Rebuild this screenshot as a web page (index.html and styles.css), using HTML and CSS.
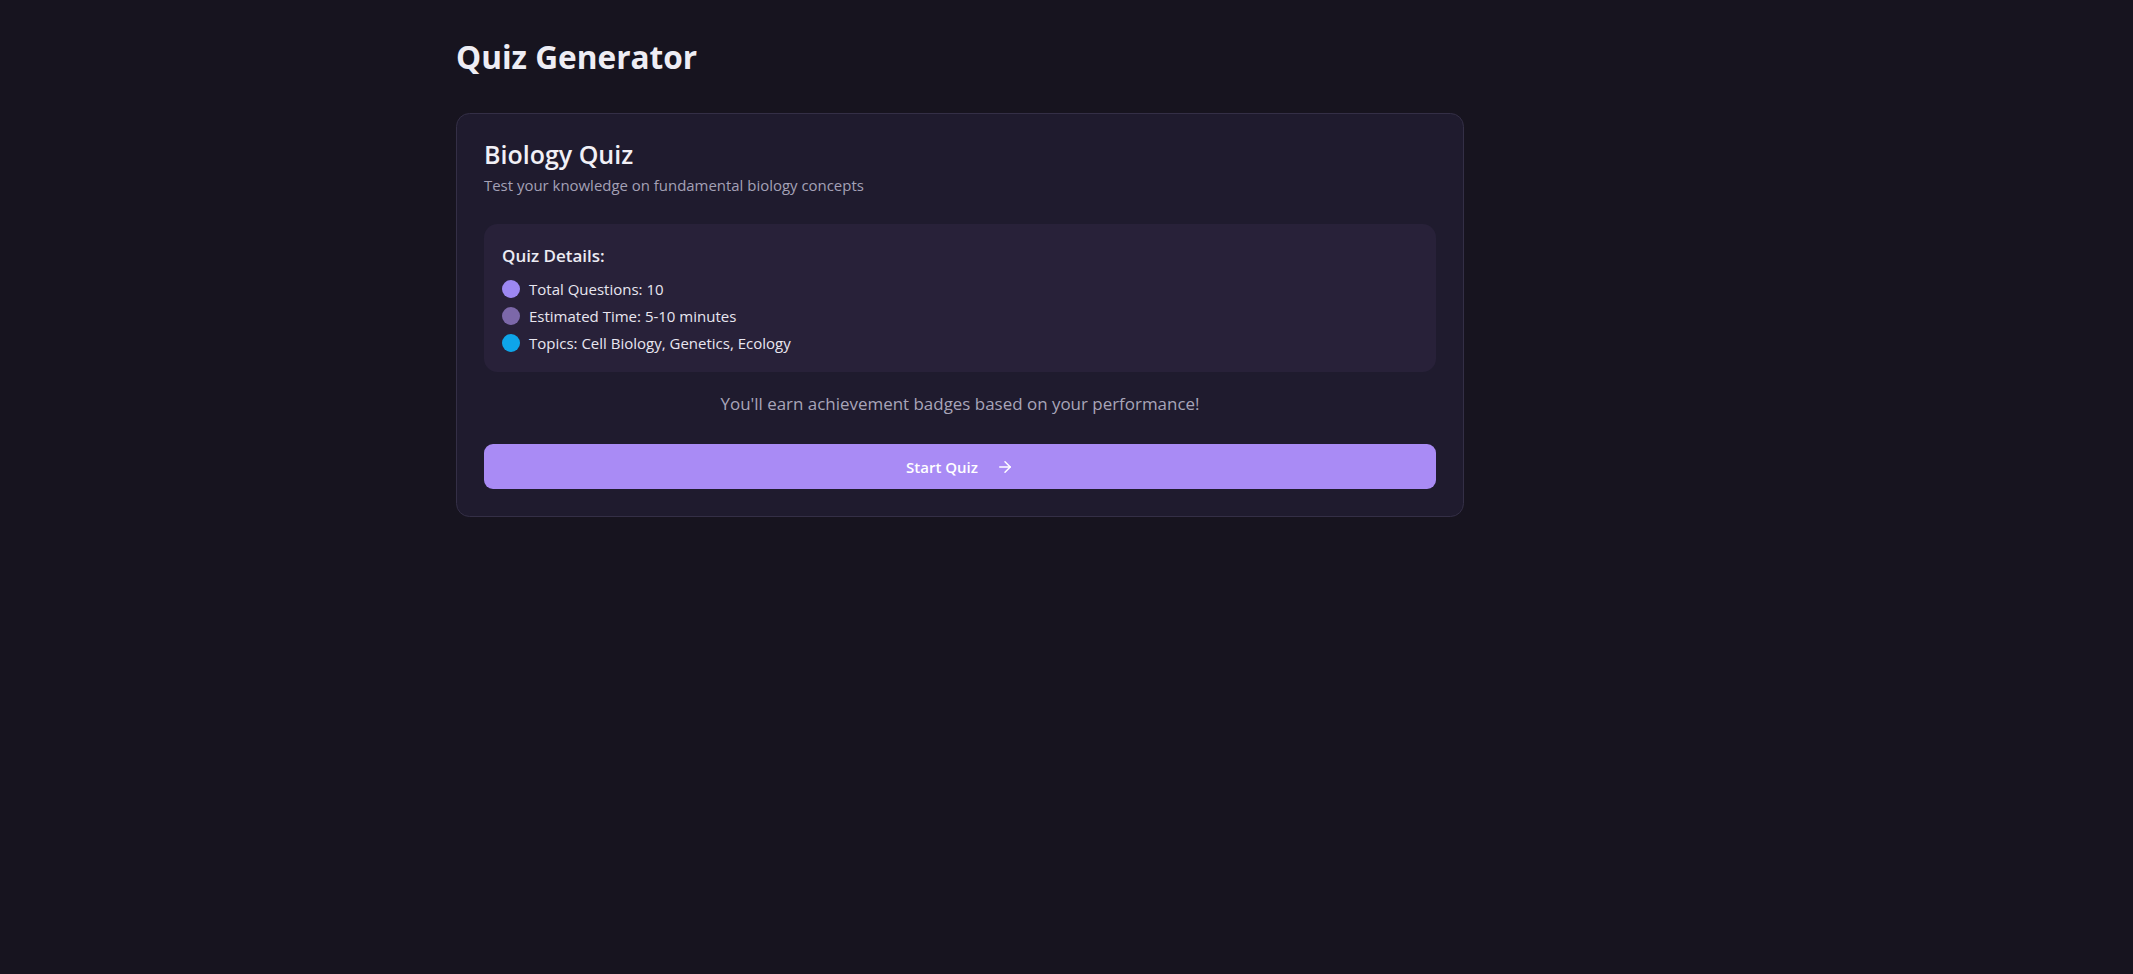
FILE: index.html
```html
<!DOCTYPE html>
<html lang="en">
<head>
<meta charset="utf-8">
<title>Quiz Generator</title>
<link rel="stylesheet" href="styles.css">
</head>
<body>
<main class="page">
  <h1 class="page-title">Quiz Generator</h1>
  <section class="card">
    <header class="card-header">
      <h2 class="card-title">Biology Quiz</h2>
      <p class="card-desc">Test your knowledge on fundamental biology concepts</p>
    </header>
    <div class="card-content">
      <div class="details">
        <h3 class="details-title">Quiz Details:</h3>
        <ul class="details-list">
          <li class="details-item"><span class="dot dot-violet"></span>Total Questions: 10</li>
          <li class="details-item"><span class="dot dot-muted"></span>Estimated Time: 5-10 minutes</li>
          <li class="details-item"><span class="dot dot-sky"></span>Topics: Cell Biology, Genetics, Ecology</li>
        </ul>
      </div>
      <p class="note">You'll earn achievement badges based on your performance!</p>
      <button class="btn" type="button">
        <span>Start Quiz</span>
        <svg class="btn-icon" viewBox="0 0 24 24" fill="none" stroke="currentColor" stroke-width="2" stroke-linecap="round" stroke-linejoin="round"><path d="M5 12h14"/><path d="m12 5 7 7-7 7"/></svg>
      </button>
    </div>
  </section>
</main>
</body>
</html>
```
FILE: styles.css
```css
* { box-sizing: border-box; }

body {
  margin: 0;
  background: #17141f;
  color: #ecebf3;
  font-family: "Segoe UI", "Open Sans", "Noto Sans", sans-serif;
}

.page {
  max-width: 1293px;
  margin: 0 auto;
  padding: 37px 36px;
}

.page-title {
  font-size: 31.6px;
  line-height: 40.5px;
  font-weight: 700;
  margin: 0 0 35px;
  color: #eeedf4;
}

.card {
  max-width: 1008px;
  background: #1f1b2e;
  border: 1px solid #342f46;
  border-radius: 13.5px;
}

.card-header {
  padding: 27px;
  display: flex;
  flex-direction: column;
  gap: 6.75px;
}

.card-title {
  font-size: 25px;
  line-height: 27px;
  font-weight: 600;
  margin: 0;
  color: #f1f0f6;
}

.card-desc {
  font-size: 14.95px;
  line-height: 22.5px;
  color: #a4a1b6;
  margin: 0;
}

.card-content {
  padding: 0 27px 27px;
}

.details {
  background: #282139;
  border-radius: 13.5px;
  padding: 18px;
}

.details-title {
  font-size: 17px;
  line-height: 27px;
  font-weight: 600;
  margin: 0 0 9px;
  color: #ecebf3;
}

.details-list {
  list-style: none;
  margin: 0;
  padding: 0;
  display: flex;
  flex-direction: column;
  gap: 4.5px;
}

.details-item {
  display: flex;
  align-items: center;
  gap: 9px;
  font-size: 15px;
  line-height: 22.5px;
  color: #e8e6f0;
}

.dot {
  width: 18px;
  height: 18px;
  border-radius: 50%;
  flex: none;
}

.dot-violet { background: #9d88f2; }
.dot-muted { background: #7c68a9; }
.dot-sky { background: #0ea5e9; }

.note {
  text-align: center;
  font-size: 16.95px;
  line-height: 27px;
  color: #a8a5b9;
  margin: 18px 0 27px;
}

.btn {
  width: 100%;
  height: 45px;
  border: 0;
  border-radius: 9px;
  background: #a98bf5;
  color: #ffffff;
  font-family: inherit;
  font-size: 15px;
  line-height: 22.5px;
  font-weight: 600;
  display: flex;
  align-items: center;
  justify-content: center;
  gap: 18px;
  cursor: pointer;
}

.btn-icon {
  width: 18px;
  height: 18px;
}
```
